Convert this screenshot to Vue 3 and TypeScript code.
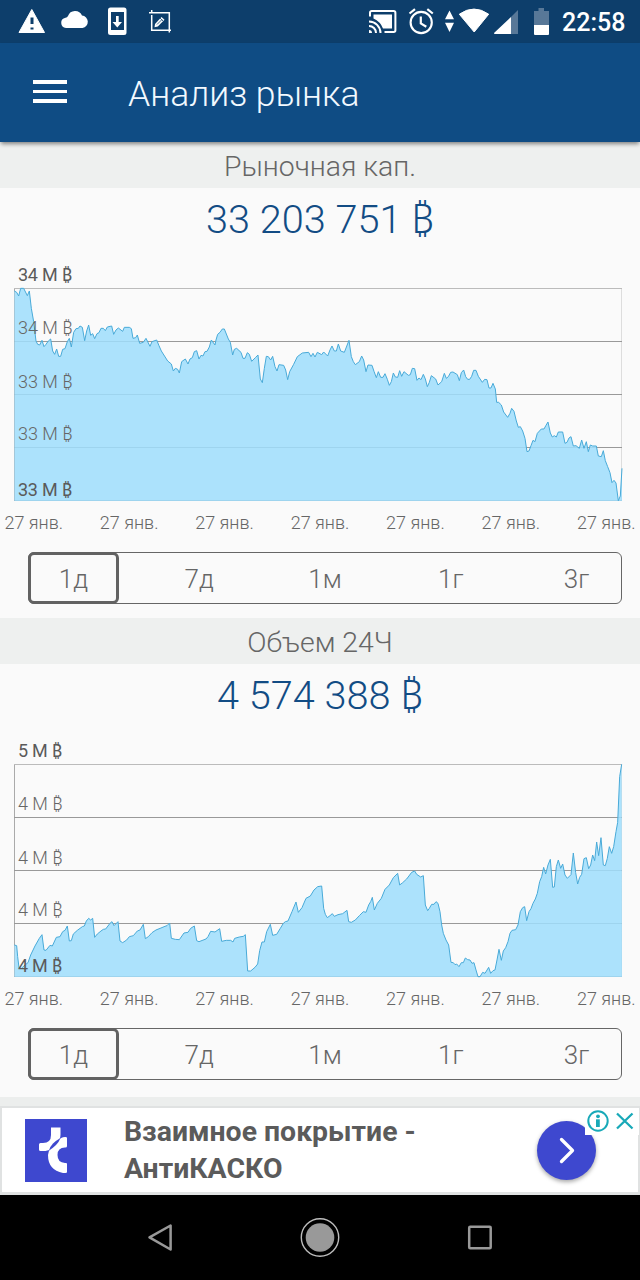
<script setup lang="ts">
interface Market {
  title: string
  value: string
  top: number
  ticks: string[]
  line: string
}

const ranges: string[] = ['1д', '7д', '1м', '1г', '3г']
const dates: string[] = Array.from({ length: 7 }, () => '27 янв.')
const tickBaselines: number[] = [-7, 46, 100, 152, 208]
const gridRows: number[] = [0.5, 53.5, 106.5, 159.5, 212.5]

// Series are sampled at a third of a pixel; `top` is the upper edge of the plot in those units.
const markets: Market[] = [
  {
    title: 'Рыночная кап.',
    value: '33 203 751 ₿',
    top: 99,
    ticks: ['34 M ₿', '34 M ₿', '33 M ₿', '33 M ₿', '33 M ₿'],
    line: '43,108 50,112 56,123 62,100 71,100 75,108 82,122 88,108 94,160 101,200 108,258 113,268 119,270 126,256 132,275 138,268 145,258 152,252 158,288 164,298 170,282 176,304 182,304 188,283 195,281 202,260 208,250 214,276 221,232 228,221 235,220 240,213 247,217 254,257 260,228 266,210 272,241 278,236 284,251 291,236 297,233 303,220 310,220 316,227 322,216 335,213 341,238 348,225 355,219 368,229 373,217 388,217 394,221 399,250 407,248 412,240 419,265 430,262 438,250 450,274 456,260 470,255 477,272 484,288 503,318 514,327 520,348 526,340 533,343 538,354 545,320 556,312 564,327 570,312 577,308 583,290 590,287 597,312 603,301 609,303 615,290 621,289 628,276 634,255 645,270 648,255 653,238 660,232 667,222 673,222 679,237 685,252 691,262 698,300 703,283 710,280 723,292 729,310 735,310 742,293 748,298 755,319 766,308 774,300 781,372 787,383 793,340 799,304 805,305 812,315 818,304 825,335 831,348 837,329 851,331 857,345 863,374 869,350 881,328 892,305 907,294 926,292 933,305 939,295 945,306 952,292 965,299 971,291 983,303 990,285 996,273 1003,288 1009,288 1015,267 1022,288 1033,292 1047,256 1054,305 1060,320 1066,329 1078,320 1085,303 1091,315 1098,350 1104,330 1116,331 1122,349 1129,368 1135,350 1142,367 1149,367 1155,356 1162,373 1168,391 1174,380 1180,354 1186,366 1193,367 1199,347 1205,364 1212,350 1225,361 1231,359 1237,340 1244,341 1251,376 1257,369 1263,374 1270,358 1276,372 1282,395 1288,382 1294,362 1307,372 1314,390 1325,380 1333,355 1339,370 1345,365 1352,352 1359,351 1372,359 1378,377 1384,353 1391,345 1397,365 1403,373 1409,373 1415,364 1421,346 1428,346 1435,364 1447,382 1454,373 1461,374 1467,399 1473,399 1479,385 1486,402 1490,442 1496,442 1504,450 1511,471 1523,487 1530,475 1535,460 1542,469 1549,498 1555,517 1561,515 1568,528 1575,550 1581,590 1587,588 1593,572 1599,556 1605,560 1612,535 1624,522 1632,522 1638,511 1644,501 1651,534 1657,546 1663,542 1669,546 1675,531 1688,531 1695,565 1701,562 1707,549 1713,545 1720,573 1728,572 1738,580 1745,555 1752,580 1759,560 1765,590 1771,570 1778,573 1789,573 1795,603 1804,605 1810,587 1816,617 1823,635 1830,653 1836,683 1842,676 1848,684 1855,737 1861,723 1866,640'
  },
  {
    title: 'Объем 24Ч',
    value: '4 574 388 ₿',
    top: 72,
    ticks: ['5 M ₿', '4 M ₿', '4 M ₿', '4 M ₿', '4 M ₿'],
    line: '43,615 50,617 53,650 57,683 64,685 75,675 84,668 92,645 105,618 118,595 126,584 132,630 138,631 150,616 157,618 169,592 180,590 188,575 195,571 202,558 208,603 214,602 220,582 232,571 247,560 253,558 259,543 266,535 272,540 278,535 284,592 292,582 303,573 310,568 317,567 330,550 336,545 342,557 354,545 360,603 368,608 380,600 388,590 400,587 412,573 420,570 430,553 436,596 445,590 456,578 468,570 483,564 495,559 501,557 509,549 514,595 526,598 538,599 552,579 564,577 572,565 583,558 590,602 597,605 618,597 624,590 632,574 645,576 659,566 665,604 679,601 692,601 699,606 704,595 718,591 730,589 736,584 743,693 752,693 765,682 773,672 779,632 786,606 793,606 800,575 811,553 818,586 830,583 841,565 850,550 856,545 864,543 876,515 888,486 895,517 906,503 918,475 931,468 942,450 953,440 965,438 971,505 976,523 982,533 990,527 997,521 1003,529 1014,524 1028,521 1041,511 1046,545 1054,547 1066,540 1078,527 1090,515 1098,517 1106,495 1112,485 1117,472 1123,510 1132,490 1144,475 1155,448 1168,435 1180,413 1193,400 1199,435 1208,428 1220,417 1235,397 1244,393 1250,403 1262,411 1270,407 1276,495 1283,512 1288,505 1295,493 1302,493 1308,485 1314,490 1320,515 1325,555 1330,580 1338,600 1346,615 1353,667 1360,668 1365,674 1370,672 1377,680 1384,668 1390,668 1396,654 1403,659 1410,660 1416,670 1422,668 1428,690 1434,710 1440,710 1448,697 1455,700 1466,682 1472,700 1479,692 1485,690 1491,660 1497,628 1504,661 1510,633 1517,623 1524,605 1530,580 1536,571 1547,569 1554,555 1561,515 1568,503 1574,500 1580,542 1587,515 1593,506 1599,490 1606,477 1612,460 1619,425 1625,410 1631,382 1637,402 1644,375 1651,358 1658,442 1663,441 1669,380 1675,360 1682,385 1688,372 1695,405 1702,415 1713,404 1720,339 1727,398 1733,432 1739,412 1745,403 1752,356 1759,353 1766,386 1772,375 1778,345 1784,362 1790,306 1796,347 1803,293 1810,375 1816,377 1822,355 1828,320 1835,340 1841,320 1848,275 1853,247 1859,110 1865,73'
  }
]

const area = (m: Market): string => `43,${m.top + 639} ${m.line} 1866,${m.top + 639}`
const plotTransform = (m: Market): string => `scale(.33333) translate(0 ${-m.top})`
</script>

<template>
  <div class="screen">
    <div class="status">
      <svg class="status-left" width="200" height="43" viewBox="0 0 200 43">
        <path fill="#fff" fill-rule="evenodd" stroke="#fff" stroke-linejoin="round" d="M31.800 9.500 44.500 32.500H19ZM30 17v7.500h4V17Zm0 10v3h4v-3Z" />
        <path fill="#fff" d="M66 28a5.200 5.200 0 0 1-.5-10.300q1.700-.2 2.500-1.700a7.500 7.500 0 0 1 14-.5 6.300 6.300 0 0 1 .5 12.500Z" />
        <path fill="#fff" fill-rule="evenodd" d="M110.500 7.500h13.500a2.500 2.500 0 0 1 2.500 2.500v22.500a2.500 2.500 0 0 1-2.500 2.500H110.500a2.500 2.500 0 0 1-2.500-2.500V10a2.500 2.500 0 0 1 2.500-2.500ZM111 12v18h13V12Z" />
        <path fill="#fff" d="M116 16h2.700v6h3.300l-4.700 5.500-4.800-5.500h3.500Z" />
        <path fill="none" stroke="#fff" stroke-width="1.500" d="M149 12.800h20.300V32.500M151.700 10v2.800M151.700 15v15.300H171" />
        <path fill="#fff" d="m155 24 6.500-7 3 2.800-6.700 6.600-3.300.8Z" />
        <path stroke="#0d3e6b" stroke-width=".8" d="m157 24.500 5-5m-2-1.500 3 3" />
      </svg>
      <svg class="status-right" width="195" height="43" viewBox="365 0 195 43">
        <path fill="none" stroke="#fff" stroke-width="2" d="M370 16.500v-3.800a1.700 1.700 0 0 1 1.700-1.700h22a1.700 1.700 0 0 1 1.700 1.700v17.600a1.700 1.700 0 0 1-1.700 1.700H384.500M369 21.500a11.500 11.500 0 0 1 11.500 11.500M369 26a7 7 0 0 1 7 7" />
        <path fill="#fff" d="M369 30a3 3 0 0 1 3 3h-3ZM373.500 14.500h18.500v14h-9a18 18 0 0 0-9.500-10Z" />
        <circle cx="421.200" cy="22.500" r="10.600" fill="none" stroke="#fff" stroke-width="2.100" />
        <path fill="none" stroke="#fff" stroke-width="2.200" d="M409.500 13.500l5.500-4.300M432.800 13.500l-5.500-4.300M420.800 16.500v7l5.500 3.300" />
        <path fill="#fff" d="M449.500 10.500l4.500 8.700h-9ZM445 22.700h9l-4.500 9.200Z" />
        <path fill="#fff" stroke="#fff" stroke-linejoin="round" d="M459.300 14.200q14.700-10.300 29.400 0L474.200 32Z" />
        <path fill="#587898" d="M518 10v24h-7V17Z" />
        <path fill="#fff" d="M511 17v17h-16.500q-.8-.8 0-1.500Z" />
        <path fill="#587898" d="M538.500 8h5.500v3h5v14.500h-15V11h4.500Z" />
        <path fill="#fff" d="M534 25h15v9a1 1 0 0 1-1 1h-13a1 1 0 0 1-1-1Z" />
      </svg>
      <span class="clock">22:58</span>
    </div>

    <header class="appbar">
      <div class="burger"><i /><i /><i /></div>
      <h1>Анализ рынка</h1>
    </header>

    <main>
      <section v-for="m in markets" :key="m.title" class="market">
        <h2>{{ m.title }}</h2>
        <div class="value">{{ m.value }}</div>
        <svg class="chart" width="640" height="214" viewBox="0 0 640 214">
          <path class="side" d="M14.500 0v213" />
          <path class="side far" d="M621.500 0v213" />
          <path v-for="(y, i) in gridRows" :key="y" class="grid" :class="{ soft: i === 0 }" :d="`M14 ${y}H622`" />
          <g :transform="plotTransform(m)">
            <polygon class="fill" :points="area(m)" />
            <polyline class="stroke" :points="m.line" />
          </g>
          <text v-for="(t, i) in m.ticks" :key="i" class="tick" :class="{ strong: i === 0 || i === 4 }" x="18" :y="tickBaselines[i]">{{ t }}</text>
        </svg>
        <div class="dates"><span v-for="(d, i) in dates" :key="i">{{ d }}</span></div>
        <div class="ranges">
          <span v-for="(r, i) in ranges" :key="r" :class="{ active: i === 0 }">{{ r }}</span>
        </div>
      </section>
      <div class="next" />
    </main>

    <div class="ad">
      <svg class="logo" width="62" height="63" viewBox="0 0 62 63">
        <rect width="62" height="63" fill="#3e48cf" />
        <path fill="#fff" d="M26 8.500h9.500v7q0 4.500-3 7.500l-5.500 6q-3 3-6.500 3h-5q-1.500 0-1.500-1.500v-5q0-1.500 1.500-1.500H18q8 0 8-8Z" />
        <path fill="#fff" d="M42 19v8q0 1.500-1.500 1.500H40q-7.500 0-7.500 7.500t7.500 8h1q1 0 1 1V53q0 1-1.500 1h-2.500Q23 51 23 36q0-4 3-7l6.500-7q3.500-4 7.500-4h.5q1.500 0 1.500 1Z" />
        <path fill="#3e48cf" d="M24 31.500q1-4 4-7t7.500-5.500q-1.500 4-4.500 7t-7 5.500Z" />
      </svg>
      <p>Взаимное покрытие -<br />АнтиКАСКО</p>
      <div class="go">
        <svg width="58" height="58" viewBox="0 0 58 58"><path fill="none" stroke="#fff" stroke-width="3.300" stroke-linecap="round" stroke-linejoin="round" d="m24.500 18.500 11 11-11 11" /></svg>
      </div>
      <div class="choices">
        <svg width="54" height="27" viewBox="0 0 54 27">
          <g fill="none" stroke="#18a9b8" stroke-width="2">
            <circle cx="13" cy="13" r="9.700" />
            <path stroke-width="2.300" d="m32 5.500 15.500 15M47.500 5.500 32 20.500" />
          </g>
          <circle cx="13" cy="8.300" r="1.900" fill="#18a9b8" />
          <path fill="#18a9b8" d="M11 11.300h3.800v7.700H11Z" />
        </svg>
      </div>
    </div>

    <nav>
      <svg width="640" height="85" viewBox="0 0 640 85">
        <path fill="none" stroke="#999" stroke-width="2.500" stroke-linejoin="round" d="M170.600 30.500v24L149.500 42.300Z" />
        <circle cx="320" cy="42.500" r="18.700" fill="none" stroke="#bbb" stroke-width="1.400" />
        <circle cx="320" cy="42.500" r="14.300" fill="#999" />
        <rect x="469.200" y="31.700" width="21.500" height="21.500" rx="1" fill="none" stroke="#999" stroke-width="2.500" />
      </svg>
    </nav>
  </div>
</template>

<style>
body { margin: 0; background: #fafafa; }
</style>

<style scoped>
.screen { width: 640px; height: 1280px; overflow: hidden; display: flex; flex-direction: column; background: #fafafa; color: #666; font-family: Roboto, "Noto Sans", sans-serif; font-weight: 300; }
h1, h2, p { margin: 0; font-weight: 300; }
svg { display: block; flex: none; }
.status { flex: none; height: 43px; display: flex; background: #0d3e6b; color: #fff; }
.status-right { margin-left: auto; }
.clock { width: 80px; box-sizing: border-box; padding-left: 2px; font-size: 25px; font-weight: 500; line-height: 45px; white-space: nowrap; }
.appbar { flex: none; height: 99px; display: flex; background: #0f4c84; color: #f2f9ff; position: relative; z-index: 1; box-shadow: 0 3px 4px -1px rgba(0, 0, 0, .45); }
.burger { width: 34px; margin: 37px 61px 0 33px; display: flex; flex-direction: column; gap: 6px; }
.burger i { height: 3.500px; background: #fff; }
h1 { font-size: 35.500px; line-height: 103px; white-space: nowrap; }
main { flex: none; height: 964px; overflow: hidden; }
.market { height: 476px; }
h2 { height: 46px; background: #eef0ef; text-align: center; font-size: 28.400px; line-height: 49px; }
.value { height: 100px; text-align: center; color: #124c84; font-size: 39.700px; line-height: 64px; }
.chart { overflow: visible; }
.side { stroke: #aaa; }
.far { stroke: #ddd; }
.grid { stroke: #999; }
.soft { stroke: #bbb; }
.fill { fill: #9eddfb; fill-opacity: .86; }
.stroke { fill: none; stroke: #48aad8; stroke-width: 3; stroke-linejoin: round; }
.tick { fill: #666; font-size: 18px; }
.strong { fill: #5a5a5a; font-weight: 400; letter-spacing: -.25px; }
.dates { display: grid; grid-template-columns: repeat(7, 1fr); margin: 0 -14px; height: 50px; font-size: 18px; line-height: 42px; text-align: center; }
.ranges { width: 594px; height: 52px; margin-left: 28px; box-sizing: border-box; border: 1.500px solid #666; border-radius: 6px; display: flex; justify-content: space-between; font-size: 26px; line-height: 54px; text-align: center; }
.ranges span { width: 91px; margin: -1px; box-sizing: border-box; }
.ranges .active { border: 3px solid #626262; border-radius: 6px; line-height: 48px; }
.next { height: 12px; margin-top: 3px; background: #eceeed; }
.ad { flex: none; height: 89px; box-sizing: border-box; display: flex; position: relative; background: #fff; border: 2px solid #e0e2e2; border-bottom-width: 3px; }
.logo { margin: 11px 0 0 23px; }
.ad p { margin: 6px 0 0 37px; font-size: 28.400px; font-weight: 700; line-height: 36.500px; color: #5b5b5b; white-space: nowrap; }
.go { position: absolute; left: 535px; top: 13px; width: 59px; height: 59px; border-radius: 50%; background: #3e48cf; box-shadow: 0 2px 4px rgba(0, 0, 0, .35); }
.choices { position: absolute; left: 583px; top: 0; background: #fff; }
nav { flex: none; height: 85px; background: #000; }
</style>
